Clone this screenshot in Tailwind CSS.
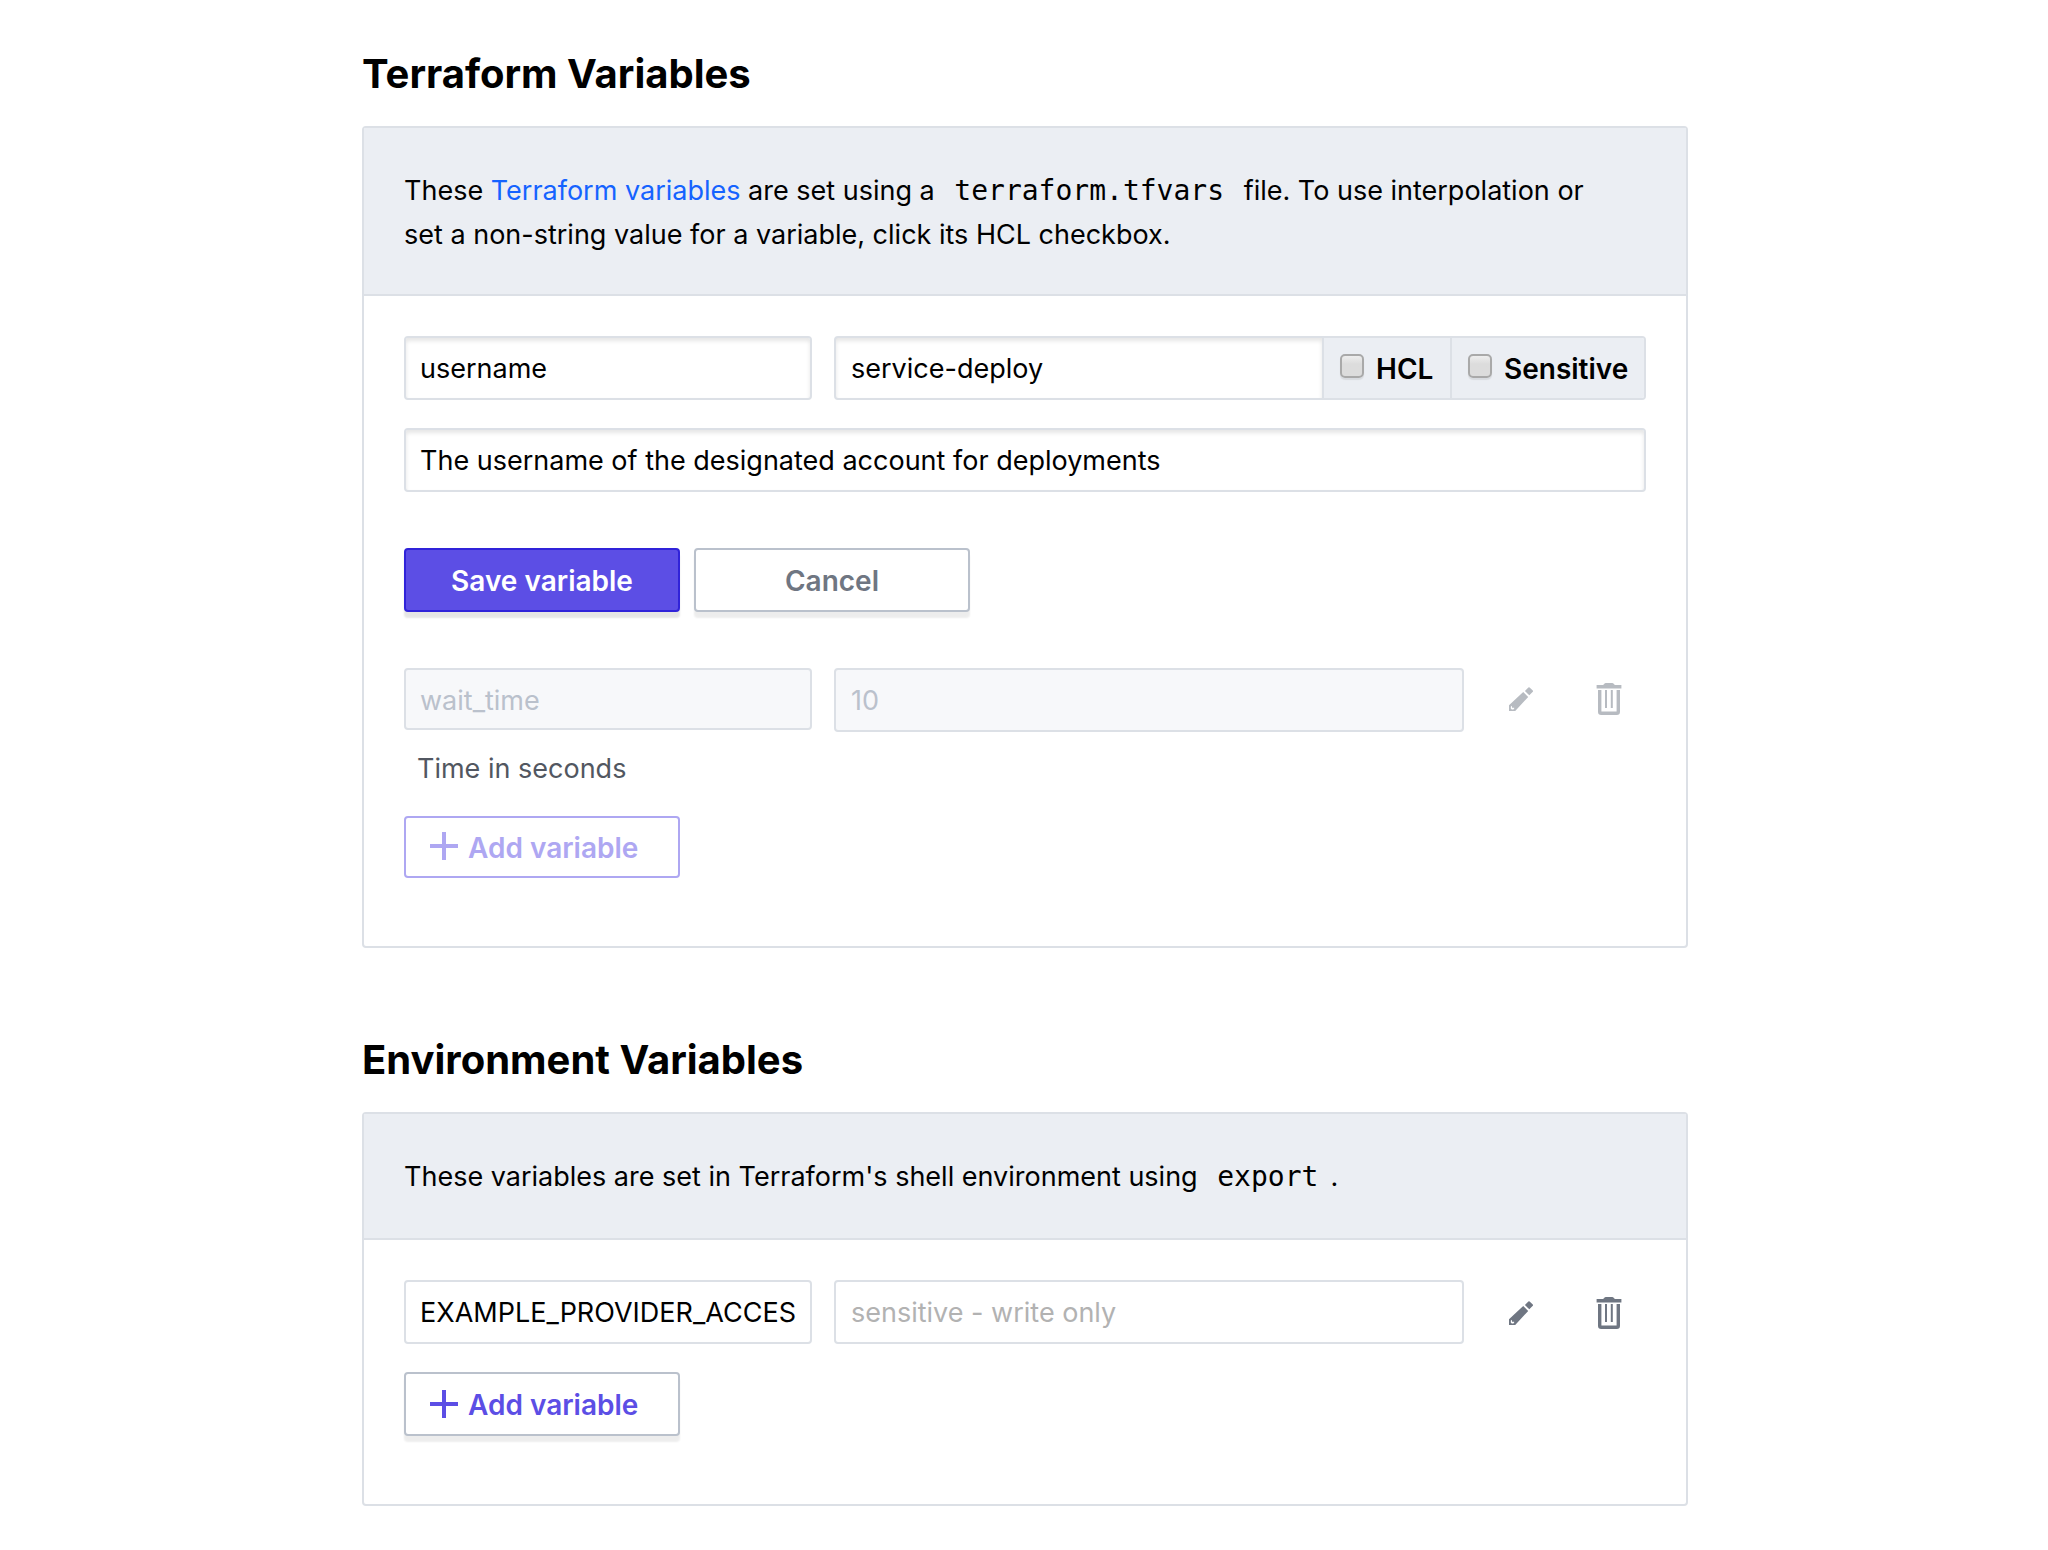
<!DOCTYPE html>
<html lang="en">
<head>
<meta charset="utf-8">
<meta name="viewport" content="width=device-width, initial-scale=1">
<title>Variables</title>
<script src="https://cdn.jsdelivr.net/npm/@tailwindcss/browser@4"></script>
</head>
<body class="bg-white font-['Inter','Liberation_Sans',sans-serif] text-[27px] leading-[44px] text-black">

<svg class="hidden" aria-hidden="true">
  <symbol id="pencil" viewBox="0 0 24 24">
    <path fill="currentColor" fill-rule="evenodd" d="M19.4.5 15.9 3.9 20.3 8.2 23.8 4.8Q24.3 4.2 23.8 3.6L20.6.5Q20 0 19.4.5ZM14.2 5 0 18.2V24H6.2L19.2 9.9ZM1.8 19.8 3 18.8V20.8H5.2V21.6L4.4 22.6H2.8L1.8 21.6Z"/>
  </symbol>
  <symbol id="trash" viewBox="0 0 26 32">
    <path fill="currentColor" fill-rule="evenodd" d="M8 1.2Q8.6 0 10 0H16Q17.4 0 18 1.2L19 2H25.4V5.4H.6V2H7ZM2 7H24V28.8Q24 32 20.8 32H5.2Q2 32 2 28.8ZM5.4 7V28.4H20.6V7ZM9 7H11V25H9ZM14.8 7H16.8V25H14.8Z"/>
  </symbol>
  <symbol id="plus" viewBox="0 0 28 28">
    <path fill="currentColor" d="M12 0h4v12h12v4H16v12h-4V16H0v-4h12Z"/>
  </symbol>
</svg>

<main class="mx-auto max-w-[1328px] pt-[46px] pb-11 pl-0.5">

  <section aria-labelledby="tf-title">
    <h1 id="tf-title" class="text-[40px] leading-[56px] font-bold">Terraform Variables</h1>
    <div class="mt-6 rounded border-2 border-[#dce0e6]">
      <p class="border-b-2 border-[#dce0e6] bg-[#ebeef3] px-10 pt-[41px] pb-[37px]">These <a href="#" class="text-[#1563ff]">Terraform variables</a> are set using a <code class="px-3 font-['DejaVu_Sans_Mono',monospace] text-[28px] leading-none">terraform.tfvars</code> file. To use interpolation or <br class="max-xl:hidden">set a non-string value for a variable, click its HCL checkbox.</p>

      <form class="px-10 pt-10 pb-17">
        <div class="flex gap-[22px]">
          <input type="text" aria-label="Key" value="username" class="h-16 w-[408px] rounded border-2 border-[#dce0e6] px-3.5 shadow-[inset_0_3px_4px_rgba(0,0,0,0.1)]">
          <div class="flex h-16 min-w-0 flex-1 overflow-hidden rounded border-2 border-[#dce0e6]">
            <input type="text" aria-label="Value" value="service-deploy" class="min-w-0 flex-1 px-[15px] pt-0.5 shadow-[inset_0_3px_4px_rgba(0,0,0,0.1)]">
            <label class="flex w-32 items-center gap-3 border-l-2 border-[#dce0e6] bg-[#ebeef3] pt-0.5 pl-4 text-[28px] font-semibold"><input type="checkbox" class="mb-1.5 size-6 shrink-0 appearance-none rounded-[5px] border-2 border-[#a9a9a9] bg-linear-to-b from-[#eeeeee] to-[#dcdcdc] to-40% shadow-[0_2px_1px_rgba(0,0,0,0.08)]">HCL</label>
            <label class="flex w-[194px] items-center gap-3 border-l-2 border-[#dce0e6] bg-[#ebeef3] pt-0.5 pl-4 text-[28px] font-semibold"><input type="checkbox" class="mb-1.5 size-6 shrink-0 appearance-none rounded-[5px] border-2 border-[#a9a9a9] bg-linear-to-b from-[#eeeeee] to-[#dcdcdc] to-40% shadow-[0_2px_1px_rgba(0,0,0,0.08)]">Sensitive</label>
          </div>
        </div>
        <input type="text" aria-label="Description" value="The username of the designated account for deployments" class="mt-7 block h-16 w-full rounded border-2 border-[#dce0e6] px-3.5 shadow-[inset_0_3px_4px_rgba(0,0,0,0.1)]">

        <div class="mt-14 flex gap-3.5">
          <button type="button" class="h-16 w-[276px] rounded border-2 border-[#3023d9] bg-[#5c4ee5] pt-0.5 text-[28px] font-semibold text-white shadow-[0_6px_2px_rgba(0,0,0,0.1)]">Save variable</button>
          <button type="button" class="h-16 w-[276px] rounded border-2 border-[#bac1cc] bg-white pt-0.5 text-[28px] font-semibold text-[#6f7682] shadow-[0_6px_2px_rgba(0,0,0,0.07)]">Cancel</button>
        </div>

        <div class="mt-14 flex items-start">
          <input type="text" disabled aria-label="Key" value="wait_time" class="mr-[22px] h-[62px] w-[408px] rounded border-2 border-[#dce0e6] bg-[#f7f8fa] px-3.5 pt-0.5 text-[#bac1cc]">
          <input type="text" disabled aria-label="Value" value="10" class="h-16 min-w-0 flex-1 rounded border-2 border-[#dce0e6] bg-[#f7f8fa] px-[15px] text-[#bac1cc]">
          <div class="flex h-[62px] w-[182px] items-center gap-[63px] pl-[45px] text-[#b7bbc1]">
            <button type="button" disabled aria-label="Edit variable"><svg class="size-6"><use href="#pencil"/></svg></button>
            <button type="button" disabled aria-label="Delete variable"><svg class="h-8 w-[26px]"><use href="#trash"/></svg></button>
          </div>
        </div>
        <p class="mt-[15px] pl-[13px] text-[#525761]">Time in seconds</p>
        <button type="button" disabled class="mt-[25px] flex h-[62px] w-[276px] items-center gap-2.5 rounded border-2 border-[#aea7f2] pl-6 text-[28px] font-semibold text-[#aea7f2]"><svg class="mb-0.5 size-7"><use href="#plus"/></svg><span class="pt-0.5">Add variable</span></button>
      </form>
    </div>
  </section>

  <section aria-labelledby="env-title" class="mt-21">
    <h1 id="env-title" class="text-[40px] leading-[56px] font-bold">Environment Variables</h1>
    <div class="mt-6 rounded border-2 border-[#dce0e6]">
      <p class="border-b-2 border-[#dce0e6] bg-[#ebeef3] px-10 pt-[41px] pb-[39px]">These variables are set in Terraform's shell environment using <code class="px-3 font-['DejaVu_Sans_Mono',monospace] text-[28px] leading-none">export</code>.</p>

      <form class="px-10 pt-10 pb-17">
        <div class="flex items-start">
          <input type="text" aria-label="Key" value="EXAMPLE_PROVIDER_ACCESS_KEY" class="mr-[22px] h-16 w-[408px] rounded border-2 border-[#dce0e6] px-3.5">
          <input type="text" aria-label="Value" placeholder="sensitive - write only" class="h-16 min-w-0 flex-1 rounded border-2 border-[#dce0e6] px-[15px] placeholder:text-[#b2b2b2]">
          <div class="flex h-16 w-[182px] items-center gap-[63px] pt-0.5 pl-[45px] text-[#6f7682]">
            <button type="button" aria-label="Edit variable"><svg class="size-6"><use href="#pencil"/></svg></button>
            <button type="button" aria-label="Delete variable"><svg class="h-8 w-[26px]"><use href="#trash"/></svg></button>
          </div>
        </div>
        <button type="button" class="mt-7 flex h-16 w-[276px] items-center gap-2.5 rounded border-2 border-[#bac1cc] bg-white pl-6 text-[28px] font-semibold text-[#5c4ee5] shadow-[0_6px_2px_rgba(0,0,0,0.07)]"><svg class="size-7"><use href="#plus"/></svg><span class="pt-0.5">Add variable</span></button>
      </form>
    </div>
  </section>

</main>
</body>
</html>
